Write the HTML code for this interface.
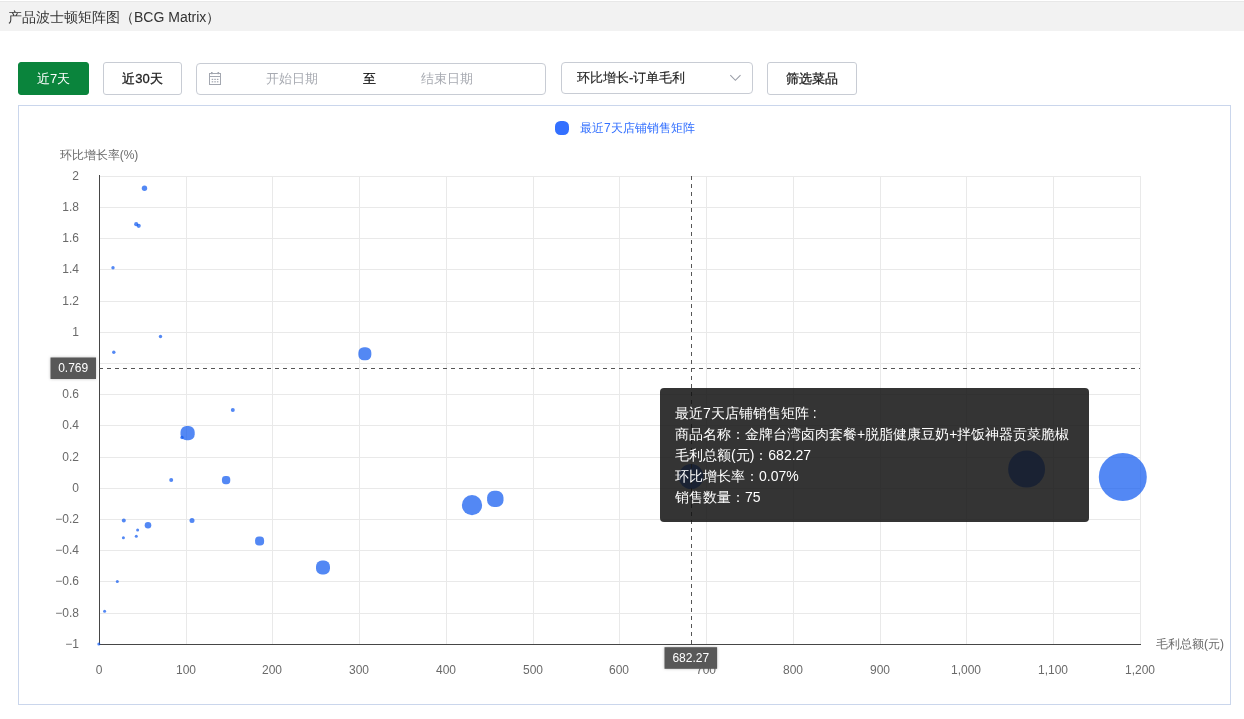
<!DOCTYPE html>
<html><head><meta charset="utf-8"><style>
*{box-sizing:border-box}
html,body{margin:0;padding:0;background:#fff;width:1244px;height:719px;overflow:hidden;font-family:"Liberation Sans",sans-serif;-webkit-font-smoothing:antialiased}
.hdr{position:absolute;left:0;top:1px;width:1244px;height:30px;background:#f2f2f2;border-top:1px solid #e8e8e8}
.ttl{position:absolute;left:8px;top:0;height:32px;line-height:34px;font-size:14px;color:#333;will-change:transform}
.btn{position:absolute;top:62px;height:33px;border:1px solid #c8ccd4;border-radius:3px;font-size:13px;color:#222;text-align:center;line-height:31px;background:#fff;will-change:transform;-webkit-text-stroke:0.3px #222}
.g{background:#0a843c;border-color:#0a843c;color:#fff;-webkit-text-stroke:0}
.dp{position:absolute;left:196px;top:63px;width:350px;height:32px;border:1px solid #c8ccd4;border-radius:4px}
.ph{position:absolute;top:0;will-change:transform;line-height:30px;font-size:13px;color:#a8abb2}
.sel{position:absolute;left:561px;top:62px;width:192px;height:32px;border:1px solid #c8ccd4;border-radius:4px}
.chart{position:absolute;left:18px;top:105px;width:1213px;height:600px;border:1px solid #cad6ec}
svg{position:absolute;left:0;top:0;will-change:transform}
.al{font-size:12px;fill:#6a6a6a;dominant-baseline:central}
.lg{font-size:12px;fill:#3370FF;dominant-baseline:central}
.pl{font-size:12px;fill:#fff;dominant-baseline:central}
.tip{position:absolute;left:660px;top:388px;width:429px;height:134px;background:rgba(17,17,17,0.85);border-radius:4px;color:#fff;font-size:14px;will-change:transform;line-height:21px;padding:15px 15px}
</style></head><body>
<div class="hdr"></div>
<div class="ttl">产品波士顿矩阵图（BCG Matrix）</div>
<div class="btn g" style="left:18px;width:71px">近7天</div>
<div class="btn" style="left:103px;width:79px">近30天</div>
<div class="dp">
 <div class="ph" style="left:69px">开始日期</div>
 <div class="ph" style="left:166px;color:#111;-webkit-text-stroke:0.2px #111">至</div>
 <div class="ph" style="left:224px">结束日期</div>
</div>
<div class="sel"><div class="ph" style="left:15px;color:#222;-webkit-text-stroke:0.15px #222">环比增长-订单毛利</div></div>
<div class="btn" style="left:767px;width:90px">筛选菜品</div>
<div class="chart"></div>
<svg width="1244" height="719" viewBox="0 0 1244 719">
<line x1="186.5" y1="176" x2="186.5" y2="644" stroke="#e9e9e9"/>
<line x1="272.5" y1="176" x2="272.5" y2="644" stroke="#e9e9e9"/>
<line x1="359.5" y1="176" x2="359.5" y2="644" stroke="#e9e9e9"/>
<line x1="446.5" y1="176" x2="446.5" y2="644" stroke="#e9e9e9"/>
<line x1="533.5" y1="176" x2="533.5" y2="644" stroke="#e9e9e9"/>
<line x1="619.5" y1="176" x2="619.5" y2="644" stroke="#e9e9e9"/>
<line x1="706.5" y1="176" x2="706.5" y2="644" stroke="#e9e9e9"/>
<line x1="793.5" y1="176" x2="793.5" y2="644" stroke="#e9e9e9"/>
<line x1="880.5" y1="176" x2="880.5" y2="644" stroke="#e9e9e9"/>
<line x1="966.5" y1="176" x2="966.5" y2="644" stroke="#e9e9e9"/>
<line x1="1053.5" y1="176" x2="1053.5" y2="644" stroke="#e9e9e9"/>
<line x1="1140.5" y1="176" x2="1140.5" y2="644" stroke="#e9e9e9"/>
<line x1="99" y1="176.5" x2="1141" y2="176.5" stroke="#e9e9e9"/>
<line x1="99" y1="207.5" x2="1141" y2="207.5" stroke="#e9e9e9"/>
<line x1="99" y1="238.5" x2="1141" y2="238.5" stroke="#e9e9e9"/>
<line x1="99" y1="269.5" x2="1141" y2="269.5" stroke="#e9e9e9"/>
<line x1="99" y1="301.5" x2="1141" y2="301.5" stroke="#e9e9e9"/>
<line x1="99" y1="332.5" x2="1141" y2="332.5" stroke="#e9e9e9"/>
<line x1="99" y1="363.5" x2="1141" y2="363.5" stroke="#e9e9e9"/>
<line x1="99" y1="394.5" x2="1141" y2="394.5" stroke="#e9e9e9"/>
<line x1="99" y1="425.5" x2="1141" y2="425.5" stroke="#e9e9e9"/>
<line x1="99" y1="457.5" x2="1141" y2="457.5" stroke="#e9e9e9"/>
<line x1="99" y1="488.5" x2="1141" y2="488.5" stroke="#e9e9e9"/>
<line x1="99" y1="519.5" x2="1141" y2="519.5" stroke="#e9e9e9"/>
<line x1="99" y1="550.5" x2="1141" y2="550.5" stroke="#e9e9e9"/>
<line x1="99" y1="581.5" x2="1141" y2="581.5" stroke="#e9e9e9"/>
<line x1="99" y1="613.5" x2="1141" y2="613.5" stroke="#e9e9e9"/>
<line x1="99.5" y1="175" x2="99.5" y2="645" stroke="#464646"/>
<line x1="99" y1="644.5" x2="1141" y2="644.5" stroke="#464646"/>
<text x="79" y="176" text-anchor="end" class="al">2</text>
<text x="79" y="207" text-anchor="end" class="al">1.8</text>
<text x="79" y="238" text-anchor="end" class="al">1.6</text>
<text x="79" y="269" text-anchor="end" class="al">1.4</text>
<text x="79" y="301" text-anchor="end" class="al">1.2</text>
<text x="79" y="332" text-anchor="end" class="al">1</text>
<text x="79" y="363" text-anchor="end" class="al">0.8</text>
<text x="79" y="394" text-anchor="end" class="al">0.6</text>
<text x="79" y="425" text-anchor="end" class="al">0.4</text>
<text x="79" y="457" text-anchor="end" class="al">0.2</text>
<text x="79" y="488" text-anchor="end" class="al">0</text>
<text x="79" y="519" text-anchor="end" class="al">−0.2</text>
<text x="79" y="550" text-anchor="end" class="al">−0.4</text>
<text x="79" y="581" text-anchor="end" class="al">−0.6</text>
<text x="79" y="613" text-anchor="end" class="al">−0.8</text>
<text x="79" y="644" text-anchor="end" class="al">−1</text>
<text x="99" y="670" text-anchor="middle" class="al">0</text>
<text x="186" y="670" text-anchor="middle" class="al">100</text>
<text x="272" y="670" text-anchor="middle" class="al">200</text>
<text x="359" y="670" text-anchor="middle" class="al">300</text>
<text x="446" y="670" text-anchor="middle" class="al">400</text>
<text x="533" y="670" text-anchor="middle" class="al">500</text>
<text x="619" y="670" text-anchor="middle" class="al">600</text>
<text x="706" y="670" text-anchor="middle" class="al">700</text>
<text x="793" y="670" text-anchor="middle" class="al">800</text>
<text x="880" y="670" text-anchor="middle" class="al">900</text>
<text x="966" y="670" text-anchor="middle" class="al">1,000</text>
<text x="1053" y="670" text-anchor="middle" class="al">1,100</text>
<text x="1140" y="670" text-anchor="middle" class="al">1,200</text>
<circle cx="144.5" cy="188.3" r="2.7" fill="rgba(10,86,240,0.7)"/>
<circle cx="136.2" cy="224.2" r="2.1" fill="rgba(10,86,240,0.7)"/>
<circle cx="138.7" cy="225.8" r="2.1" fill="rgba(10,86,240,0.7)"/>
<circle cx="113" cy="267.8" r="1.7" fill="rgba(10,86,240,0.7)"/>
<circle cx="113.8" cy="352.2" r="1.7" fill="rgba(10,86,240,0.7)"/>
<circle cx="160.5" cy="336.5" r="1.7" fill="rgba(10,86,240,0.7)"/>
<circle cx="232.8" cy="410" r="2.0" fill="rgba(10,86,240,0.7)"/>
<rect x="180.50" y="426.10" width="14.2" height="14.2" rx="5.96" fill="rgba(10,86,240,0.7)"/>
<circle cx="182" cy="437.5" r="1.7" fill="rgba(10,86,240,0.7)"/>
<circle cx="171.2" cy="480" r="2.0" fill="rgba(10,86,240,0.7)"/>
<rect x="221.95" y="475.95" width="8.3" height="8.3" rx="3.49" fill="rgba(10,86,240,0.7)"/>
<circle cx="123.8" cy="520.5" r="2.0" fill="rgba(10,86,240,0.7)"/>
<circle cx="148" cy="525.3" r="3.3" fill="rgba(10,86,240,0.7)"/>
<circle cx="137.6" cy="530" r="1.5" fill="rgba(10,86,240,0.7)"/>
<circle cx="123.4" cy="537.8" r="1.5" fill="rgba(10,86,240,0.7)"/>
<circle cx="136.3" cy="536.3" r="1.5" fill="rgba(10,86,240,0.7)"/>
<circle cx="192" cy="520.5" r="2.5" fill="rgba(10,86,240,0.7)"/>
<circle cx="117.3" cy="581.4" r="1.5" fill="rgba(10,86,240,0.7)"/>
<circle cx="104.6" cy="611.3" r="1.5" fill="rgba(10,86,240,0.7)"/>
<circle cx="98.8" cy="644" r="1.5" fill="rgba(10,86,240,0.7)"/>
<rect x="358.35" y="347.25" width="13" height="13" rx="5.46" fill="rgba(10,86,240,0.7)"/>
<rect x="255.10" y="536.60" width="9" height="9" rx="3.78" fill="rgba(10,86,240,0.7)"/>
<rect x="316.00" y="560.50" width="14" height="14" rx="5.88" fill="rgba(10,86,240,0.7)"/>
<circle cx="472" cy="505.1" r="10.1" fill="rgba(10,86,240,0.7)"/>
<rect x="487.10" y="490.70" width="16.4" height="16.4" rx="6.89" fill="rgba(10,86,240,0.7)"/>
<circle cx="1026.6" cy="469.1" r="18.5" fill="rgba(10,86,240,0.7)"/>
<circle cx="1122.8" cy="477" r="24.0" fill="rgba(10,86,240,0.7)"/>
<circle cx="691.1" cy="476.6" r="12.5" fill="rgba(10,86,240,0.7)"/>
<line x1="691.5" y1="176" x2="691.5" y2="644" stroke="#555" stroke-dasharray="4 4"/>
<line x1="99" y1="368.5" x2="1140" y2="368.5" stroke="#555" stroke-dasharray="4 4"/>
<text x="99" y="155" text-anchor="middle" class="al">环比增长率(%)</text>
<text x="1156" y="644" text-anchor="start" class="al">毛利总额(元)</text>
<rect x="555" y="121" width="14" height="14" rx="5.5" fill="#3370FF"/>
<text x="580" y="128" class="lg">最近7天店铺销售矩阵</text>
<defs><filter id="sh" x="-30%" y="-50%" width="160%" height="200%"><feGaussianBlur stdDeviation="1.5"/></filter></defs>
<rect x="50.5" y="357.5" width="45.5" height="21.5" fill="rgba(0,0,0,0.25)" filter="url(#sh)"/>
<rect x="664.5" y="647.2" width="52.6" height="21.6" fill="rgba(0,0,0,0.25)" filter="url(#sh)"/>
<rect x="50.5" y="357.5" width="45.5" height="21.5" fill="#585858"/>
<text x="73.2" y="368" text-anchor="middle" class="pl">0.769</text>
<rect x="664.5" y="647.2" width="52.6" height="21.6" fill="#585858"/>
<text x="690.8" y="658" text-anchor="middle" class="pl">682.27</text>
<rect x="209.5" y="73.5" width="11" height="11" fill="none" stroke="#a3a7b0"/>
<line x1="209.5" y1="76.5" x2="220.5" y2="76.5" stroke="#a3a7b0"/>
<rect x="211" y="72" width="1.6" height="2.2" fill="#a3a7b0"/><rect x="217.5" y="72" width="1.6" height="2.2" fill="#a3a7b0"/>
<rect x="211.7" y="78.8" width="1.5" height="1.2" fill="#a3a7b0"/>
<rect x="214.3" y="78.8" width="1.5" height="1.2" fill="#a3a7b0"/>
<rect x="216.9" y="78.8" width="1.5" height="1.2" fill="#a3a7b0"/>
<rect x="211.7" y="81.2" width="1.5" height="1.2" fill="#a3a7b0"/>
<rect x="214.3" y="81.2" width="1.5" height="1.2" fill="#a3a7b0"/>
<rect x="216.9" y="81.2" width="1.5" height="1.2" fill="#a3a7b0"/>
<polyline points="730.3,75.2 735.4,80.3 740.5,75.2" fill="none" stroke="#9a9ea8" stroke-width="1.1"/>
</svg>
<div class="tip">最近7天店铺销售矩阵 :<br>商品名称：金牌台湾卤肉套餐+脱脂健康豆奶+拌饭神器贡菜脆椒<br>毛利总额(元)：682.27<br>环比增长率：0.07%<br>销售数量：75</div>
</body></html>
